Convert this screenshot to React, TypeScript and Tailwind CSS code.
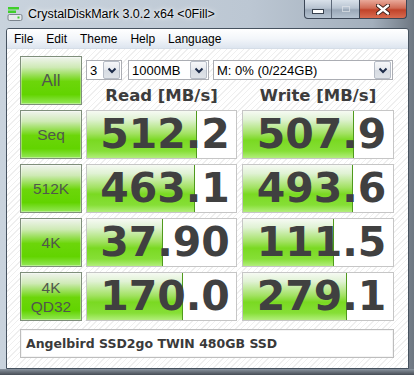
import type { ReactNode } from 'react';

type Row = {
  label: ReactNode;
  read: string;
  readBar: number;
  write: string;
  writeBar: number;
};

const rows: Row[] = [
  { label: 'Seq', read: '512.2', readBar: 110, write: '507.9', writeBar: 111 },
  { label: '512K', read: '463.1', readBar: 108, write: '493.6', writeBar: 110 },
  { label: '4K', read: '37.90', readBar: 76, write: '111.5', writeBar: 91 },
  {
    label: (
      <span className="flex flex-col items-center leading-[19px]">
        <span>4K</span>
        <span>QD32</span>
      </span>
    ),
    read: '170.0',
    readBar: 96,
    write: '279.1',
    writeBar: 104,
  },
];

const greenBtn =
  'bg-[linear-gradient(to_bottom,#f0f4ee_0%,#cfeab6_22%,#6cd60a_52%,#62d400_80%,#94e858_100%)] border border-[#7f8f7b] shadow-[inset_0_0_0_1px_rgba(255,255,255,0.35)]';

function AppIcon() {
  return (
    <svg width="16" height="16" viewBox="0 0 16 16" className="shrink-0">
      <rect x="1" y="1" width="11" height="2.5" fill="#3fcf2a" />
      <rect x="1" y="4.5" width="8" height="2.5" fill="#3fcf2a" />
      <rect x="1" y="8.5" width="14" height="6" rx="1.5" fill="#e6e9ec" stroke="#7c858e" />
      <rect x="10.5" y="10.5" width="2" height="2" fill="#3fcf2a" />
    </svg>
  );
}

function TitleButtons() {
  return (
    <div className="flex self-start mr-[7px]">
      <div className="flex h-[19px] border border-t-0 border-[#3b4656] rounded-bl-[4px] overflow-hidden bg-[linear-gradient(to_bottom,#d9e1ea_0%,#b8c4d1_45%,#9aa8b8_55%,#b6c3d1_100%)]">
        <div className="w-[27px] flex items-center justify-center border-r border-[#5c6878]">
          <div className="w-[10px] h-[3px] mt-[5px] bg-white border border-[#38424f] box-content" />
        </div>
        <div className="w-[27px] flex items-center justify-center">
          <div className="w-[8px] h-[6px] border-[1.5px] border-[#dfe4ea] opacity-70" />
        </div>
      </div>
      <div className="w-[47px] h-[19px] flex items-center justify-center border border-t-0 border-l-0 border-[#3b4656] rounded-br-[4px] bg-[linear-gradient(to_bottom,#e9a99a_0%,#d06b55_45%,#c1432a_55%,#d86b50_100%)]">
        <svg width="14" height="11" viewBox="0 0 14 11">
          <path d="M2 1.5 L12 9.5 M12 1.5 L2 9.5" stroke="#3a1e18" strokeWidth="4.2" strokeLinecap="round" />
          <path d="M2 1.5 L12 9.5 M12 1.5 L2 9.5" stroke="#ffffff" strokeWidth="2.4" strokeLinecap="round" />
        </svg>
      </div>
    </div>
  );
}

function Chevron() {
  return (
    <svg width="10" height="7" viewBox="0 0 10 7">
      <path d="M1.5 1.5 L5 5 L8.5 1.5" fill="none" stroke="#1d2c4a" strokeWidth="2" />
    </svg>
  );
}

function Combo({ value, width, className = '' }: { value: string; width: string; className?: string }) {
  return (
    <div className={`${width} ${className} h-[20px] flex items-center bg-white border border-[#abadb3]`}>
      <span className="flex-1 pl-[3px] text-[13px] leading-none text-black font-['Liberation_Sans',sans-serif] whitespace-nowrap">
        {value}
      </span>
      <div className="w-[17px] h-[18px] mr-[1px] flex items-center justify-center border border-[#b6bcc6] rounded-[2px] bg-[linear-gradient(to_bottom,#f6f7f9_0%,#e6e9ee_50%,#d6dbe2_51%,#dfe3e8_100%)]">
        <Chevron />
      </div>
    </div>
  );
}

function Cell({ value, bar, width }: { value: string; bar: number; width: string }) {
  return (
    <div className={`${width} relative border border-[#c6c6c6] bg-white flex items-center justify-center pl-[7px]`}>
      <div
        className="absolute left-0 top-0 bottom-0 border-r border-[#4f9a1c] bg-[linear-gradient(to_bottom,#f6faf3_0%,#e0f2d4_18%,#a2e262_48%,#7ad922_62%,#86df36_85%,#b2ee7c_100%)]"
        style={{ width: bar }}
      />
      <span className="relative text-[41px] leading-none font-bold text-[#404040] font-['DejaVu_Sans',sans-serif]">
        {value}
      </span>
    </div>
  );
}

export default function App() {
  return (
    <div className="w-[414px] h-[375px] flex flex-col overflow-hidden bg-[linear-gradient(to_right,#c9d3dd_0%,#bcc7d3_60%,#a3afbc_90%,#6e7782_100%)]">
      <div className="h-[28px] flex items-start shrink-0">
        <div className="flex items-center gap-[5px] pl-[7px] pt-[5px]">
          <AppIcon />
          <span className="text-[12.5px] text-black font-['Liberation_Sans',sans-serif] [text-shadow:0_0_6px_#ffffff,0_0_3px_#ffffff]">
            CrystalDiskMark 3.0.2 x64 &lt;0Fill&gt;
          </span>
        </div>
        <div className="ml-auto" />
        <TitleButtons />
      </div>

      <div className="ml-[6px] w-[403px] h-[341px] flex flex-col border border-[#46525f] rounded-t-[3px] overflow-hidden">
        <div className="h-[20px] shrink-0 flex items-center gap-[13px] pl-[7px] border-b border-[#d5dde7] bg-[linear-gradient(to_bottom,#ffffff_0%,#f3f6fa_50%,#dde5ef_100%)] text-[12px] text-black font-['Liberation_Sans',sans-serif]">
          <span>File</span>
          <span>Edit</span>
          <span>Theme</span>
          <span>Help</span>
          <span>Language</span>
        </div>

        <div className="flex-1 flex flex-col gap-[5px] pl-[13px] pt-[7px] bg-[repeating-linear-gradient(135deg,#ffffff_0px,#ffffff_3px,#efefef_3px,#efefef_4px)]">
          <div className="flex h-[49px]">
            <div className={`w-[62px] ${greenBtn} flex items-center justify-center text-[17px] text-[#50584c] font-['Liberation_Sans',sans-serif]`}>
              All
            </div>
            <div className="ml-[4px] w-[308px] flex flex-col">
              <div className="flex mt-[4px]">
                <Combo value="3" width="w-[36px]" />
                <Combo value="1000MB" width="w-[81px]" className="ml-[6px]" />
                <Combo value="M: 0% (0/224GB)" width="w-[180px]" className="ml-[4px]" />
              </div>
              <div className="flex mt-[4px] h-[24px] items-center text-[16.5px] font-bold text-[#3c3c3c] font-['DejaVu_Sans',sans-serif] whitespace-nowrap">
                <span className="w-[151px] text-center">Read [MB/s]</span>
                <span className="ml-[5px] w-[152px] text-center">Write [MB/s]</span>
              </div>
            </div>
          </div>

          {rows.map((row, i) => (
            <div key={i} className="flex h-[49px]">
              <div className={`w-[62px] ${greenBtn} flex items-center justify-center text-[15.5px] text-[#50584c] font-['Liberation_Sans',sans-serif]`}>
                {row.label}
              </div>
              <Cell value={row.read} bar={row.readBar} width="ml-[4px] w-[151px]" />
              <Cell value={row.write} bar={row.writeBar} width="ml-[5px] w-[152px]" />
            </div>
          ))}

          <div className="mt-[3px] w-[374px] h-[29px] flex items-center pl-[5px] pt-[1px] bg-white border border-[#bdbdbd] shadow-[inset_0_0_0_1px_#f4f4f4] text-[12.5px] font-bold text-[#3a3a3a] font-['DejaVu_Sans',sans-serif]">
            Angelbird SSD2go TWIN 480GB SSD
          </div>
        </div>
      </div>

      <div className="flex-1 bg-[linear-gradient(to_bottom,#8a949f,#474d55)]" />
    </div>
  );
}
